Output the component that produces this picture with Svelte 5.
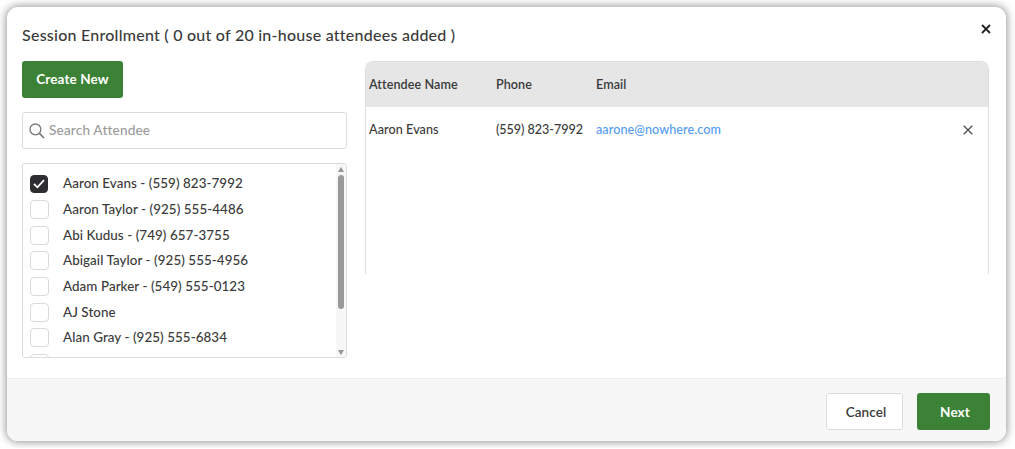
<script lang="ts">
	interface Attendee {
		name: string;
		phone?: string;
		email?: string;
	}

	const attendees: Attendee[] = [
		{ name: 'Aaron Evans', phone: '(559) 823-7992', email: 'aarone@nowhere.com' },
		{ name: 'Aaron Taylor', phone: '(925) 555-4486' },
		{ name: 'Abi Kudus', phone: '(749) 657-3755' },
		{ name: 'Abigail Taylor', phone: '(925) 555-4956' },
		{ name: 'Adam Parker', phone: '(549) 555-0123' },
		{ name: 'AJ Stone' },
		{ name: 'Alan Gray', phone: '(925) 555-6834' },
		{ name: '' }
	];

	let selected = $state(['Aaron Evans']);
	let rows = $derived(attendees.filter((a) => selected.includes(a.name)));

	function toggle(name: string) {
		selected = selected.includes(name)
			? selected.filter((n) => n !== name)
			: [...selected, name];
	}
</script>

<div class="modal">
	<header class="modal__header">
		<h1>Session Enrollment ( 0 out of 20 in-house attendees added )</h1>
		<button class="icon-button" type="button" aria-label="Close">
			<svg width="10" height="10" viewBox="0 0 10 10">
				<path d="M1 1l8 8M9 1l-8 8" stroke="#222" stroke-width="1.8" />
			</svg>
		</button>
	</header>

	<div class="modal__body">
		<section class="picker">
			<button class="button button--primary create" type="button">Create New</button>

			<label class="search">
				<svg width="16" height="16" viewBox="0 0 16 16" fill="none" stroke="#777" stroke-width="1.3">
					<circle cx="6.4" cy="6.4" r="5.4" />
					<path d="M10.4 10.4l4.6 4.6" stroke-width="1.6" />
				</svg>
				<input type="text" placeholder="Search Attendee" />
			</label>

			<div class="list">
				<div class="list__items">
					{#each attendees as attendee}
						<button class="list__item" type="button" onclick={() => toggle(attendee.name)}>
							<span class="checkbox" class:checked={selected.includes(attendee.name)}>
								{#if selected.includes(attendee.name)}
									<svg width="12" height="10" viewBox="0 0 12 10">
										<path d="M1 5l3.4 3.3L11 1.2" fill="none" stroke="#fff" stroke-width="1.8" />
									</svg>
								{/if}
							</span>
							<span class="list__label">
								{attendee.name}{attendee.phone ? ` - ${attendee.phone}` : ''}
							</span>
						</button>
					{/each}
				</div>
				<div class="scrollbar">
					<svg width="6" height="5" viewBox="0 0 6 5"><path d="M3 0l3 5H0z" fill="#969696" /></svg>
					<div class="scrollbar__track">
						<div class="scrollbar__thumb"></div>
					</div>
					<svg width="6" height="5" viewBox="0 0 6 5"><path d="M0 0h6L3 5z" fill="#969696" /></svg>
				</div>
			</div>
		</section>

		<section class="table">
			<div class="table__row table__row--head">
				<span>Attendee Name</span>
				<span>Phone</span>
				<span>Email</span>
			</div>
			{#each rows as row}
				<div class="table__row">
					<span class="name">{row.name}</span>
					<span class="phone">{row.phone}</span>
					<span class="email">{row.email}</span>
					<button
						class="icon-button"
						type="button"
						aria-label="Remove attendee"
						onclick={() => toggle(row.name)}
					>
						<svg width="10" height="10" viewBox="0 0 10 10">
							<path d="M.7.7l8.6 8.6M9.3.7L.7 9.3" stroke="#555" stroke-width="1.4" />
						</svg>
					</button>
				</div>
			{/each}
		</section>
	</div>

	<footer class="modal__footer">
		<button class="button button--plain" type="button">Cancel</button>
		<button class="button button--primary next" type="button">Next</button>
	</footer>
</div>

<style>
	:global(body) {
		background: #fff;
		overflow: hidden;
	}

	.modal {
		box-sizing: border-box;
		display: flex;
		flex-direction: column;
		width: 999px;
		height: 434px;
		margin: 7px;
		overflow: hidden;
		background: #fff;
		border-radius: 11px;
		box-shadow: 0 0 8px 1px rgba(0, 0, 0, 0.42);
		color: #3a3a3a;
		font-family: Lato, sans-serif;
		font-weight: 500;
		font-size: 13px;
	}

	button {
		padding: 0;
		background: none;
		border: 0;
		font: inherit;
		color: inherit;
		white-space: nowrap;
	}

	.icon-button {
		display: flex;
	}

	.modal__header {
		display: flex;
		align-items: flex-start;
		justify-content: space-between;
		height: 37px;
		padding: 17px 15px 0 15px;
	}

	h1 {
		margin: 0;
		font-size: 16px;
		font-weight: 500;
		line-height: 22px;
		letter-spacing: 0.245px;
	}

	.modal__body {
		display: flex;
		gap: 18px;
		flex: 1;
		padding: 0 17px 0 15px;
	}

	.picker {
		width: 325px;
	}

	.button {
		box-sizing: border-box;
		height: 37px;
		border-radius: 3px;
		font-size: 13.5px;
		font-weight: 700;
		letter-spacing: 0.1px;
	}

	.button--primary {
		background: #3b8236;
		color: #fff;
	}

	.button--plain {
		width: 77px;
		padding-left: 3px;
		background: #fff;
		border: 1px solid #dcdcdc;
		font-weight: 600;
	}

	.create {
		display: block;
		width: 101px;
		padding-bottom: 1px;
	}

	.next {
		width: 73px;
		padding-left: 3px;
	}

	.search {
		box-sizing: border-box;
		display: flex;
		align-items: center;
		gap: 4px;
		height: 37px;
		margin-top: 14px;
		padding: 0 6px;
		border: 1px solid #dcdcdc;
		border-radius: 3px;
	}

	input {
		flex: 1;
		padding: 0 0 1px;
		border: 0;
		outline: none;
		font: inherit;
		font-size: 13.6px;
		letter-spacing: 0.17px;
	}

	input::placeholder {
		color: #9b9b9b;
	}

	.list {
		box-sizing: border-box;
		display: flex;
		height: 195px;
		margin-top: 14px;
		overflow: hidden;
		border: 1px solid #dcdcdc;
		border-radius: 3px;
	}

	.list__items {
		flex: 1;
		padding: 7px 0 0 7px;
	}

	.list__item {
		display: flex;
		align-items: center;
		gap: 14px;
		height: 25.7px;
	}

	.checkbox {
		box-sizing: border-box;
		display: flex;
		align-items: center;
		justify-content: center;
		width: 19px;
		height: 19px;
		border: 1px solid #dadada;
		border-radius: 4px;
	}

	.checkbox.checked {
		width: 18px;
		height: 18px;
		margin-right: 1px;
		background: #2e2e30;
		border-color: #2e2e30;
	}

	.list__label {
		padding-bottom: 1px;
		font-size: 13.4px;
		letter-spacing: 0.06px;
	}

	.scrollbar {
		display: flex;
		flex-direction: column;
		align-items: center;
		gap: 3px;
		width: 10px;
		padding: 3px 0 2px;
		background: #f7f7f7;
	}

	.scrollbar__track {
		flex: 1;
	}

	.scrollbar__thumb {
		width: 6px;
		height: 134px;
		background: #999;
		border-radius: 3px;
	}

	.table {
		box-sizing: border-box;
		flex: 1;
		height: 213px;
		overflow: hidden;
		border: 1px solid #dedede;
		border-bottom: 0;
		border-radius: 8px 8px 0 0;
	}

	.table__row {
		display: grid;
		grid-template-columns: 127px 100px 1fr auto;
		align-items: center;
		height: 45px;
		padding: 0 15px 0 3px;
		font-size: 12.6px;
		letter-spacing: 0.07px;
	}

	.table__row--head {
		background: #e6e6e6;
		font-weight: 600;
	}

	.phone {
		letter-spacing: -0.05px;
	}

	.email {
		color: #559cf2;
	}

	.modal__footer {
		box-sizing: border-box;
		display: flex;
		justify-content: flex-end;
		gap: 14px;
		height: 63px;
		padding: 14px 16px 0;
		background: #f7f7f7;
		border-top: 1px solid #eee;
	}
</style>
